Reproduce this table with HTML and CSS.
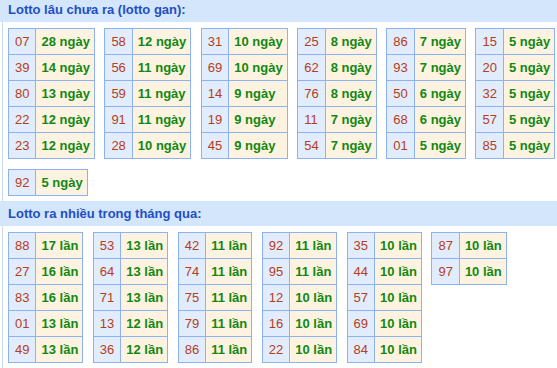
FILE: index.html
```html
<!DOCTYPE html>
<html>
<head>
<meta charset="utf-8">
<link rel="stylesheet" href="styles.css">
</head>
<body>
<div class="page">
  <div class="head first">Lotto lâu chưa ra (lotto gan):</div>
  <div class="box">
    <table class="lt"><tr><td class="n">07</td><td class="v">28 ngày</td></tr><tr><td class="n">39</td><td class="v">14 ngày</td></tr><tr><td class="n">80</td><td class="v">13 ngày</td></tr><tr><td class="n">22</td><td class="v">12 ngày</td></tr><tr><td class="n">23</td><td class="v">12 ngày</td></tr></table>
    <table class="lt"><tr><td class="n">58</td><td class="v">12 ngày</td></tr><tr><td class="n">56</td><td class="v">11 ngày</td></tr><tr><td class="n">59</td><td class="v">11 ngày</td></tr><tr><td class="n">91</td><td class="v">11 ngày</td></tr><tr><td class="n">28</td><td class="v">10 ngày</td></tr></table>
    <table class="lt"><tr><td class="n">31</td><td class="v">10 ngày</td></tr><tr><td class="n">69</td><td class="v">10 ngày</td></tr><tr><td class="n">14</td><td class="v">9 ngày</td></tr><tr><td class="n">19</td><td class="v">9 ngày</td></tr><tr><td class="n">45</td><td class="v">9 ngày</td></tr></table>
    <table class="lt"><tr><td class="n">25</td><td class="v">8 ngày</td></tr><tr><td class="n">62</td><td class="v">8 ngày</td></tr><tr><td class="n">76</td><td class="v">8 ngày</td></tr><tr><td class="n">11</td><td class="v">7 ngày</td></tr><tr><td class="n">54</td><td class="v">7 ngày</td></tr></table>
    <table class="lt"><tr><td class="n">86</td><td class="v">7 ngày</td></tr><tr><td class="n">93</td><td class="v">7 ngày</td></tr><tr><td class="n">50</td><td class="v">6 ngày</td></tr><tr><td class="n">68</td><td class="v">6 ngày</td></tr><tr><td class="n">01</td><td class="v">5 ngày</td></tr></table>
    <table class="lt"><tr><td class="n">15</td><td class="v">5 ngày</td></tr><tr><td class="n">20</td><td class="v">5 ngày</td></tr><tr><td class="n">32</td><td class="v">5 ngày</td></tr><tr><td class="n">57</td><td class="v">5 ngày</td></tr><tr><td class="n">85</td><td class="v">5 ngày</td></tr></table>
    <table class="lt"><tr><td class="n">92</td><td class="v">5 ngày</td></tr></table>
  </div>
  <div class="head">Lotto ra nhiều trong tháng qua:</div>
  <div class="box">
    <table class="lt"><tr><td class="n">88</td><td class="v">17 lần</td></tr><tr><td class="n">27</td><td class="v">16 lần</td></tr><tr><td class="n">83</td><td class="v">16 lần</td></tr><tr><td class="n">01</td><td class="v">13 lần</td></tr><tr><td class="n">49</td><td class="v">13 lần</td></tr></table>
    <table class="lt"><tr><td class="n">53</td><td class="v">13 lần</td></tr><tr><td class="n">64</td><td class="v">13 lần</td></tr><tr><td class="n">71</td><td class="v">13 lần</td></tr><tr><td class="n">13</td><td class="v">12 lần</td></tr><tr><td class="n">36</td><td class="v">12 lần</td></tr></table>
    <table class="lt"><tr><td class="n">42</td><td class="v">11 lần</td></tr><tr><td class="n">74</td><td class="v">11 lần</td></tr><tr><td class="n">75</td><td class="v">11 lần</td></tr><tr><td class="n">79</td><td class="v">11 lần</td></tr><tr><td class="n">86</td><td class="v">11 lần</td></tr></table>
    <table class="lt"><tr><td class="n">92</td><td class="v">11 lần</td></tr><tr><td class="n">95</td><td class="v">11 lần</td></tr><tr><td class="n">12</td><td class="v">10 lần</td></tr><tr><td class="n">16</td><td class="v">10 lần</td></tr><tr><td class="n">22</td><td class="v">10 lần</td></tr></table>
    <table class="lt"><tr><td class="n">35</td><td class="v">10 lần</td></tr><tr><td class="n">44</td><td class="v">10 lần</td></tr><tr><td class="n">57</td><td class="v">10 lần</td></tr><tr><td class="n">69</td><td class="v">10 lần</td></tr><tr><td class="n">84</td><td class="v">10 lần</td></tr></table>
    <table class="lt"><tr><td class="n">87</td><td class="v">10 lần</td></tr><tr><td class="n">97</td><td class="v">10 lần</td></tr></table>
  </div>
</div>
</body>
</html>
```
FILE: styles.css
```css
html, body {
  margin: 0;
  padding: 0;
  background: #ffffff;
}
body {
  font-family: "Liberation Sans", Arial, sans-serif;
  font-size: 13px;
  overflow: hidden;
}
.page {
  width: 557px;
}
.head {
  height: 25px;
  line-height: 25px;
  padding-left: 8px;
  background: #d3e6fb;
  color: #1f4fc4;
  font-weight: bold;
  font-size: 13px;
}
.head.first {
  margin-top: -3px;
}
.box {
  margin-left: 2px;
  border-left: 1px solid #c9dcf3;
  padding: 6px 0 5px 5px;
  display: flex;
  flex-wrap: wrap;
  align-items: flex-start;
  column-gap: 9.5px;
  row-gap: 10px;
}
.lt {
  border-collapse: collapse;
  border: 1px solid #8db2f2;
}
.lt td {
  border: 1px solid #8db2f2;
  height: 25px;
  line-height: 25px;
  white-space: nowrap;
}
.lt td.n {
  padding: 0 6px;
  background: #e1edfd;
  color: #b53c1c;
}
.lt td.v {
  padding: 0 4px 0 5px;
  background: #fef3e1;
  color: #118811;
  font-weight: bold;
}
```
